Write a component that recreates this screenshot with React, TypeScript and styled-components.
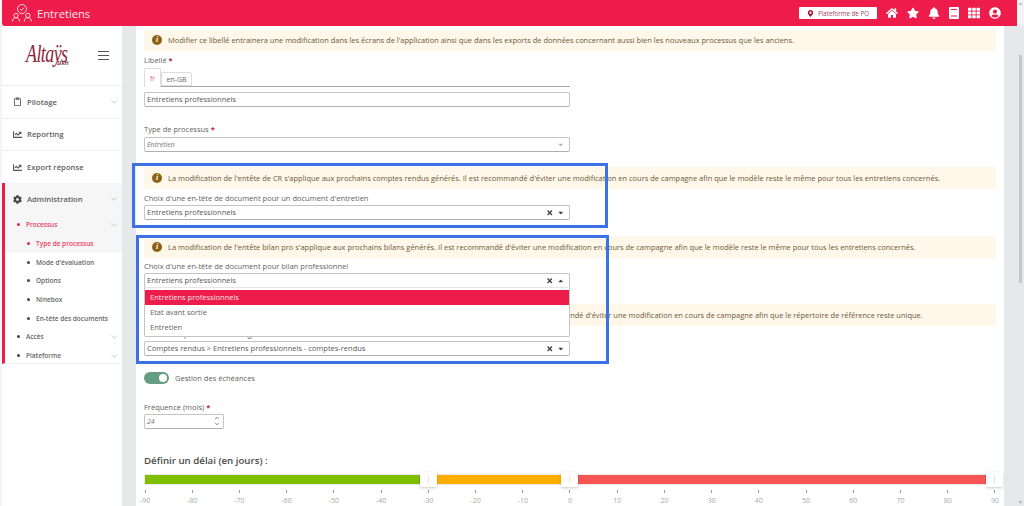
import React from "react";
import styled, { createGlobalStyle } from "styled-components";
import { ChevronDown } from "lucide-react";
import {
  FaBell,
  FaCaretDown,
  FaCaretUp,
  FaChartLine,
  FaCog,
  FaHome,
  FaMapMarkerAlt,
  FaRegClipboard,
  FaStar,
  FaTh,
  FaTimes,
  FaUserCircle,
} from "react-icons/fa";

const GlobalStyle = createGlobalStyle`
  html, body { margin: 0; padding: 0; height: 506px; overflow: hidden; background: #f4f5f6; }
  body { font-family: "Open Sans", "Liberation Sans", sans-serif; font-size: 7.5px; color: #5a5a5a; }
  * { box-sizing: border-box; }
`;

const Page = styled.div`
  position: relative;
  display: flex;
  width: 1024px;
  height: 506px;
  overflow: hidden;
`;

const Window = styled.div`
  width: 1017px;
  height: 506px;
  padding-left: 2px;
  display: flex;
  flex-direction: column;
`;

const TopBar = styled.header`
  height: 26px;
  flex: none;
  background: #ed1c4a;
  border-bottom-left-radius: 3px;
  display: flex;
  align-items: center;
  padding-left: 10px;
  color: #fff;
  position: relative;
  z-index: 2;
`;

const AppTitle = styled.h1`
  margin: 0 0 0 5px;
  font-size: 11.2px;
  font-weight: 400;
  color: #fde8ec;
`;

const SiteButton = styled.div`
  margin-left: auto;
  width: 78px;
  height: 12px;
  background: #fff;
  border-radius: 1px;
  display: flex;
  align-items: center;
  justify-content: center;
  gap: 4px;
  font-size: 6.2px;
  color: #a0415a;
  svg { color: #a3123a; font-size: 7px; }
`;

const TopIcons = styled.nav`
  display: flex;
  align-items: center;
  margin-left: 9px;
  margin-right: 16px;
  gap: 9px;
  font-size: 12px;
  svg { display: block; }
`;

const Body = styled.div`
  flex: 1;
  display: flex;
  min-height: 0;
`;

const Sidebar = styled.aside`
  width: 120px;
  flex: none;
  background: #fff;
`;

const LogoRow = styled.div`
  height: 59px;
  display: flex;
  align-items: center;
  padding-left: 24px;
  position: relative;
`;

const Logo = styled.div`
  position: relative;
  width: 46px;
  height: 28px;
  padding-top: 5.5px;
  color: #8f1f3c;
`;

const LogoScript = styled.span`
  display: block;
  font-family: "Liberation Serif", serif;
  font-style: italic;
  font-size: 25px;
  line-height: 14px;
  letter-spacing: -0.8px;
  white-space: nowrap;
  transform: scaleX(0.72);
  transform-origin: left;
`;

const LogoSmall = styled.span`
  position: absolute;
  left: 31px;
  top: 19.5px;
  font-size: 5px;
  line-height: 4px;
  font-weight: 700;
  color: #6d3341;
`;

const Burger = styled.div`
  position: absolute;
  left: 96px;
  top: 25px;
  width: 11px;
  height: 9px;
  border-top: 1px solid #555;
  border-bottom: 1px solid #555;
  &::after {
    content: "";
    display: block;
    margin-top: 3px;
    height: 1px;
    background: #555;
  }
`;

const MenuCard = styled.div`
  height: 32.67px;
  border-top: 1px solid #eee;
  display: flex;
  align-items: center;
  padding: 0 3px 0 11px;
  font-size: 7.7px;
  font-weight: 600;
  color: #5e5e5e;
  svg.lead { width: 9px; margin-right: 5px; font-size: 9px; color: #555; }
`;

const Chevron = styled(ChevronDown)`
  margin-left: auto;
  width: 10px;
  height: 10px;
  color: #a8a8a8;
  stroke-width: 1.5;
`;

const AdminBlock = styled.div`
  height: 181px;
  border-left: 3px solid #ed1c4a;
  border-bottom: 1px solid #eee;
`;

const AdminTop = styled.div`
  background: #f6f6f6;
  height: 70px;
`;

const AdminHead = styled.div`
  height: 32.7px;
  display: flex;
  align-items: center;
  padding: 0 3px 0 8px;
  font-size: 7.7px;
  font-weight: 600;
  color: #5e5e5e;
  svg.lead { margin-right: 5px; font-size: 9px; color: #444; }
`;

const SubItem = styled.div<{ $depth: number; $active?: boolean }>`
  height: 18.67px;
  display: flex;
  align-items: center;
  padding: 0 3px 0 ${({ $depth }) => ($depth === 2 ? 22 : 12)}px;
  font-size: 6.5px;
  font-weight: 600;
  white-space: nowrap;
  color: ${({ $active }) => ($active ? "#ed3c63" : "#666")};
  &::before {
    content: "";
    width: 3px;
    height: 3px;
    border-radius: 50%;
    margin-right: 6px;
    flex: none;
    background: ${({ $active }) => ($active ? "#ed1c4a" : "#444")};
  }
`;

const Gutter = styled.div`
  width: 14px;
  flex: none;
  background: #e5e9ec;
`;

const Main = styled.main`
  width: 868px;
  flex: none;
  background: #fff;
  padding: 3px 8px 0;
  overflow: hidden;
`;

const RightGutter = styled.div`
  width: 13px;
  flex: none;
  background: #e5e9ec;
`;

const ScrollTrack = styled.div`
  width: 7px;
  flex: none;
  display: flex;
  flex-direction: column;
  align-items: center;
  background: #e5e9ec;
`;

const ScrollCap = styled.div`
  height: 26px;
  width: 100%;
  flex: none;
  background: #f1f3f4;
  color: #b5b8ba;
  font-size: 5px;
  line-height: 7px;
  text-align: center;
`;

const ScrollThumb = styled.div`
  margin-top: 29px;
  width: 3px;
  height: 228px;
  background: #c5c8ca;
`;

const ScrollFoot = styled.div`
  margin-top: auto;
  height: 7px;
  color: #a9acae;
  font-size: 5px;
  line-height: 7px;
  text-align: center;
`;

const Notice = styled.div<{ $top?: number }>`
  margin-top: ${({ $top }) => $top ?? 0}px;
  height: 22px;
  background: #fff7e9;
  display: flex;
  align-items: center;
  padding-left: 8px;
  color: #6a5a3c;
  font-size: 7.47px;
  white-space: nowrap;
`;

const InfoDot = styled.span`
  flex: none;
  width: 10px;
  height: 10px;
  margin-right: 6px;
  border-radius: 50%;
  background: #8d6114;
  color: #fff;
  font-family: "Liberation Serif", serif;
  font-style: italic;
  font-weight: 700;
  font-size: 8px;
  line-height: 10px;
  text-align: center;
`;

const FieldLabel = styled.label<{ $top: number }>`
  display: block;
  margin-top: ${({ $top }) => $top}px;
  height: 12px;
  line-height: 12px;
  font-size: 7.5px;
  color: #5f5f5f;
`;

const Required = styled.span`
  color: #c4123f;
  font-weight: 700;
  margin-left: 2px;
`;

const TabRow = styled.div`
  width: 426px;
  height: 20px;
  margin-top: 1px;
  display: flex;
  align-items: flex-end;
  border-bottom: 1px solid #a9a9a9;
`;

const Tab = styled.div<{ $active?: boolean }>`
  height: ${({ $active }) => ($active ? 19 : 14)}px;
  width: ${({ $active }) => ($active ? 17 : 31)}px;
  margin-bottom: ${({ $active }) => ($active ? -1 : 0)}px;
  background: #fff;
  border: 1px solid #ddd;
  border-bottom: ${({ $active }) => ($active ? "none" : "1px solid #ddd")};
  border-radius: 2px 2px 0 0;
  display: flex;
  align-items: center;
  justify-content: center;
  font-size: 7px;
  color: ${({ $active }) => ($active ? "#ed5c7a" : "#666")};
`;

const Input = styled.div<{ $top?: number; $width?: number; $muted?: boolean }>`
  margin-top: ${({ $top }) => $top ?? 0}px;
  width: ${({ $width }) => $width ?? 426}px;
  height: 14.5px;
  border: 1px solid #c4c4c4;
  border-bottom-color: #b0b0b0;
  border-radius: 2px;
  background: #fff;
  display: flex;
  align-items: center;
  padding: 0 5px 0 2px;
  font-size: ${({ $muted }) => ($muted ? 7 : 7.5)}px;
  color: ${({ $muted }) => ($muted ? "#777" : "#595959")};
  font-style: ${({ $muted }) => ($muted ? "italic" : "normal")};
`;

const SelectIcons = styled.span<{ $disabled?: boolean }>`
  margin-left: auto;
  display: flex;
  align-items: center;
  gap: 3.5px;
  font-size: 7.5px;
  color: ${({ $disabled }) => ($disabled ? "#bbb" : "#444")};
  svg { display: block; }
`;

const SelectBlock = styled.div`
  position: relative;
  width: 426px;
`;

const Options = styled.ul`
  position: absolute;
  z-index: 1;
  left: 0;
  top: 14px;
  width: 426px;
  height: 50px;
  margin: 0;
  padding: 0;
  list-style: none;
  background: #fff;
  border: 1px solid #c4c4c4;
  border-top: 1px solid #e6e6e6;
  border-radius: 0 0 2px 2px;
`;

const Option = styled.li<{ $active?: boolean }>`
  height: 15px;
  line-height: 15px;
  padding-left: 5px;
  margin-top: ${({ $active }) => ($active ? 2 : 0)}px;
  font-size: 7.5px;
  background: ${({ $active }) => ($active ? "#ed1c4a" : "transparent")};
  color: ${({ $active }) => ($active ? "#fde3e9" : "#5f5f5f")};
`;

const ToggleRow = styled.div`
  margin-top: 16.5px;
  height: 12px;
  display: flex;
  align-items: center;
  gap: 6px;
  font-size: 7.5px;
  color: #5f5f5f;
`;

const ToggleTrack = styled.span`
  width: 25px;
  height: 12px;
  padding: 2px;
  border-radius: 6px;
  background: #659d80;
  display: flex;
  justify-content: flex-end;
`;

const ToggleKnob = styled.span`
  width: 8px;
  height: 8px;
  border-radius: 50%;
  background: #fff;
`;

const Stepper = styled.span`
  margin-left: auto;
  margin-right: -3px;
  display: flex;
  flex-direction: column;
  color: #444;
`;

const StepChevron = styled(ChevronDown)<{ $up?: boolean }>`
  display: block;
  width: 8px;
  height: 6px;
  stroke-width: 2.6;
  transform: ${({ $up }) => ($up ? "rotate(180deg)" : "none")};
`;

const SectionTitle = styled.h2`
  margin: 25.5px 0 0;
  height: 14px;
  line-height: 14px;
  font-size: 9.7px;
  font-weight: 600;
  color: #4a4a4a;
`;

const SliderTrack = styled.div`
  margin-top: 7px;
  margin-left: 1px;
  height: 9px;
  width: 859px;
  display: flex;
`;

const SliderPart = styled.div<{ $color: string; $size: number }>`
  width: ${({ $size }) => $size}px;
  flex: none;
  background: ${({ $color }) => $color};
  box-shadow: 0 0 0 1px #e9e9e9;
`;

const Handle = styled.div`
  position: relative;
  z-index: 1;
  width: 17px;
  height: 15px;
  flex: none;
  margin-top: -3px;
  background: #fff;
  border-radius: 2px;
  box-shadow: 0 1px 3px rgba(0, 0, 0, 0.22);
  &::after {
    content: "";
    display: block;
    width: 1px;
    height: 7px;
    margin: 4px auto 0;
    background: #e2e2e2;
  }
`;

const Scale = styled.div`
  margin-top: 6px;
  width: 850px;
  margin-left: 1px;
  display: flex;
  justify-content: space-between;
`;

const ScaleMark = styled.div`
  width: 0;
  display: flex;
  flex-direction: column;
  align-items: center;
  font-size: 7px;
  color: #a8a8a8;
  white-space: nowrap;
  &::before {
    content: "";
    flex: none;
    width: 1px;
    height: 3px;
    margin-bottom: 3px;
    background: #999;
  }
`;

const Highlight = styled.div<{ $left: number; $top: number; $w: number; $h: number }>`
  position: absolute;
  z-index: 3;
  left: ${({ $left }) => $left}px;
  top: ${({ $top }) => $top}px;
  width: ${({ $w }) => $w}px;
  height: ${({ $h }) => $h}px;
  border: 3px solid #3b73e6;
  pointer-events: none;
`;

const MarkIcon = () => (
  <svg width="20" height="18" viewBox="0 0 20 18" fill="none" stroke="#fde3e9" strokeWidth="0.9">
    <circle cx="10" cy="5" r="4.5" />
    <path d="M8 5l1.5 1.4 2.5-2.7" />
    <circle cx="4" cy="11.5" r="2.2" />
    <circle cx="15.8" cy="11.5" r="2.2" />
    <path d="M0.5 17.5c0-2.6 1.4-3.8 3.5-3.8s3.5 1.2 3.5 3.8M12.3 17.5c0-2.6 1.4-3.8 3.5-3.8s3.5 1.2 3.5 3.8" />
  </svg>
);

const BookIcon = () => (
  <svg width="10" height="12" viewBox="0 0 10 12" fill="#fff">
    <path d="M1 0h8a1 1 0 0 1 1 1v10a1 1 0 0 1-1 1H1a1 1 0 0 1-1-1V1a1 1 0 0 1 1-1z" />
    <path d="M2 2.5h6M2 9h6" stroke="#ed1c4a" strokeWidth="1" />
  </svg>
);

const Clear = () => <FaTimes />;

const ticks = [-90, -80, -70, -60, -50, -40, -30, -20, -10, 0, 10, 20, 30, 40, 50, 60, 70, 80, 90];

export default function App() {
  return (
    <Page>
      <GlobalStyle />
      <Window>
        <TopBar>
          <MarkIcon />
          <AppTitle>Entretiens</AppTitle>
          <SiteButton>
            <FaMapMarkerAlt />
            Plateforme de PO
          </SiteButton>
          <TopIcons>
            <FaHome />
            <FaStar />
            <FaBell />
            <BookIcon />
            <FaTh />
            <FaUserCircle />
          </TopIcons>
        </TopBar>
        <Body>
          <Sidebar>
            <LogoRow>
              <Logo>
                <LogoScript>Altaÿs</LogoScript>
                <LogoSmall>SIRH</LogoSmall>
              </Logo>
              <Burger />
            </LogoRow>
            <MenuCard>
              <FaRegClipboard className="lead" />
              Pilotage
              <Chevron />
            </MenuCard>
            <MenuCard>
              <FaChartLine className="lead" />
              Reporting
            </MenuCard>
            <MenuCard>
              <FaChartLine className="lead" />
              Export réponse
            </MenuCard>
            <AdminBlock>
              <AdminTop>
                <AdminHead>
                  <FaCog className="lead" />
                  Administration
                  <Chevron />
                </AdminHead>
                <SubItem $depth={1} $active>
                  Processus
                  <Chevron />
                </SubItem>
                <SubItem $depth={2} $active>
                  Type de processus
                </SubItem>
              </AdminTop>
              <SubItem $depth={2}>Mode d'évaluation</SubItem>
              <SubItem $depth={2}>Options</SubItem>
              <SubItem $depth={2}>Ninebox</SubItem>
              <SubItem $depth={2}>En-tête des documents</SubItem>
              <SubItem $depth={1}>
                Accès
                <Chevron />
              </SubItem>
              <SubItem $depth={1}>
                Plateforme
                <Chevron />
              </SubItem>
            </AdminBlock>
          </Sidebar>
          <Gutter />
          <Main>
            <Notice>
              <InfoDot>i</InfoDot>
              Modifier ce libellé entrainera une modification dans les écrans de l'application ainsi que dans les exports de données concernant aussi bien les nouveaux processus que les anciens.
            </Notice>
            <FieldLabel $top={3}>
              Libellé<Required>*</Required>
            </FieldLabel>
            <TabRow>
              <Tab $active>fr</Tab>
              <Tab>en-GB</Tab>
            </TabRow>
            <Input $top={5}>Entretiens professionnels</Input>
            <FieldLabel $top={16.5}>
              Type de processus<Required>*</Required>
            </FieldLabel>
            <Input $top={2} $muted>
              Entretien
              <SelectIcons $disabled>
                <FaCaretDown />
              </SelectIcons>
            </Input>
            <Notice $top={15.5}>
              <InfoDot>i</InfoDot>
              La modification de l'entête de CR s'applique aux prochains comptes rendus générés. Il est recommandé d'éviter une modification en cours de campagne afin que le modèle reste le même pour tous les entretiens concernés.
            </Notice>
            <FieldLabel $top={3}>Choix d'une en-tête de document pour un document d'entretien</FieldLabel>
            <Input $top={1}>
              Entretiens professionnels
              <SelectIcons>
                <Clear />
                <FaCaretDown />
              </SelectIcons>
            </Input>
            <Notice $top={16.5}>
              <InfoDot>i</InfoDot>
              La modification de l'entête bilan pro s'applique aux prochains bilans générés. Il est recommandé d'éviter une modification en cours de campagne afin que le modèle reste le même pour tous les entretiens concernés.
            </Notice>
            <FieldLabel $top={2}>Choix d'une en-tête de document pour bilan professionnel</FieldLabel>
            <SelectBlock>
              <Input $top={1}>
                Entretiens professionnels
                <SelectIcons>
                  <Clear />
                  <FaCaretUp />
                </SelectIcons>
              </Input>
              <Options>
                <Option $active>Entretiens professionnels</Option>
                <Option>Etat avant sortie</Option>
                <Option>Entretien</Option>
              </Options>
            </SelectBlock>
            <Notice $top={16.5}>
              <InfoDot>i</InfoDot>
              La modification du répertoire de dépôts s'applique aux prochains comptes rendus et bilans générés. Il est recommandé d'éviter une modification en cours de campagne afin que le répertoire de référence reste unique.
            </Notice>
            <FieldLabel $top={1.5}>Choix du répertoire de stockage</FieldLabel>
            <Input $top={1.5}>
              Comptes rendus &gt; Entretiens professionnels - comptes-rendus
              <SelectIcons>
                <Clear />
                <FaCaretDown />
              </SelectIcons>
            </Input>
            <ToggleRow>
              <ToggleTrack>
                <ToggleKnob />
              </ToggleTrack>
              Gestion des échéances
            </ToggleRow>
            <FieldLabel $top={17}>
              Fréquence (mois)<Required>*</Required>
            </FieldLabel>
            <Input $top={1} $width={80} $muted>
              24
              <Stepper>
                <StepChevron $up />
                <StepChevron />
              </Stepper>
            </Input>
            <SectionTitle>Définir un délai (en jours) :</SectionTitle>
            <SliderTrack>
              <SliderPart $color="#7fbf00" $size={275} />
              <Handle />
              <SliderPart $color="#ffae00" $size={124} />
              <Handle />
              <SliderPart $color="#fa5555" $size={408} />
              <Handle />
            </SliderTrack>
            <Scale>
              {ticks.map((tick) => (
                <ScaleMark key={tick}>{tick}</ScaleMark>
              ))}
            </Scale>
          </Main>
          <RightGutter />
        </Body>
      </Window>
      <ScrollTrack>
        <ScrollCap>▲</ScrollCap>
        <ScrollThumb />
        <ScrollFoot>▼</ScrollFoot>
      </ScrollTrack>
      <Highlight $left={132} $top={163} $w={476} $h={65} />
      <Highlight $left={136} $top={235} $w={473} $h={129} />
    </Page>
  );
}
